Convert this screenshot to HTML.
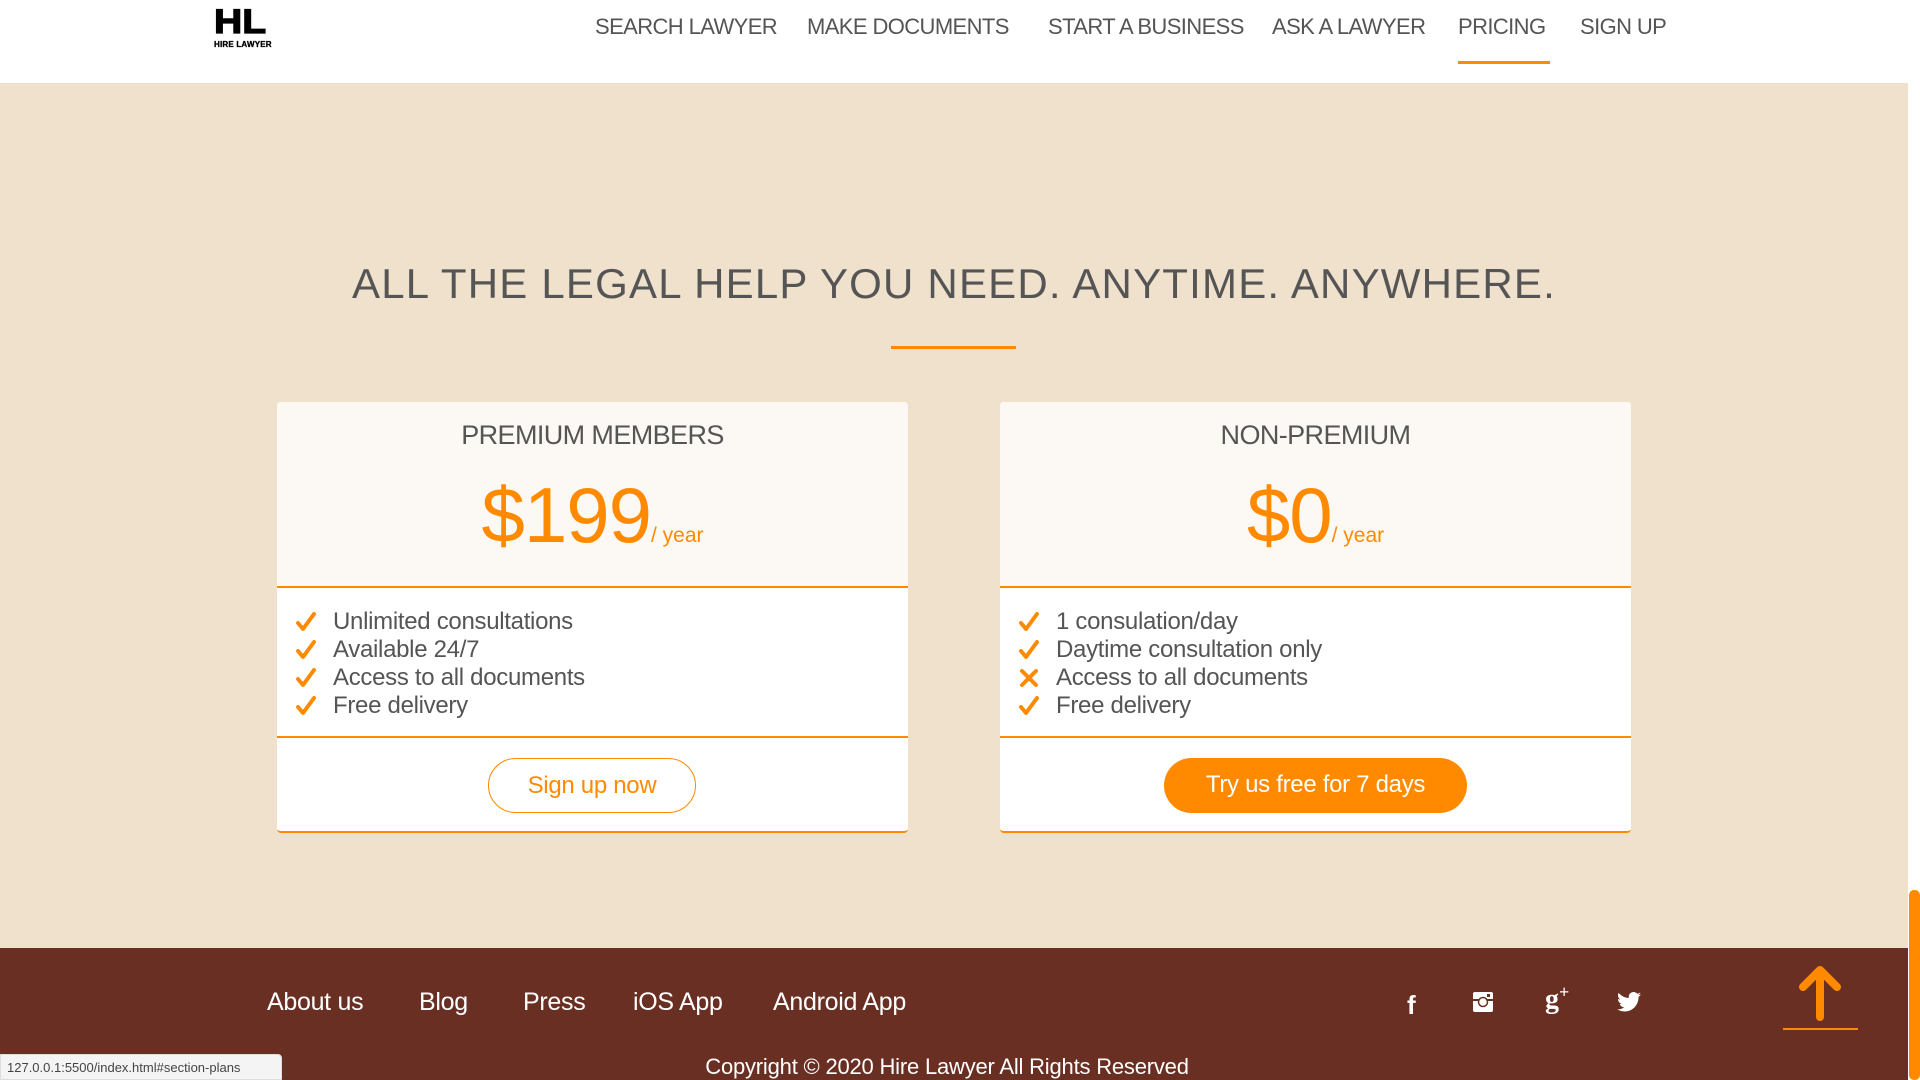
<!DOCTYPE html>
<html><head><meta charset="utf-8"><style>
*{margin:0;padding:0;box-sizing:border-box}
body{width:1920px;height:1080px;overflow:hidden;font-family:"Liberation Sans",sans-serif;background:#efe1cc;position:relative;color:#555}
.nav{position:absolute;left:0;top:0;width:1908px;height:64px;background:#fff;box-shadow:0 2px 3px rgba(0,0,0,.12)}
.gap{position:absolute;left:0;top:64px;width:1908px;height:19px;background:#fff}
.logo{position:absolute;left:214px;top:7px;color:#000;font-weight:bold}
.logo b{display:block;font-size:34px;line-height:30px;letter-spacing:0;transform:scaleX(1.15);transform-origin:left;-webkit-text-stroke:1.2px #000}
.logo i{display:block;font-style:normal;font-size:8px;letter-spacing:.2px;margin-top:3px;-webkit-text-stroke:.3px #000}
.nav a{position:absolute;top:14px;font-size:22px;color:#555;text-decoration:none;letter-spacing:-.6px;white-space:nowrap}
.ul{position:absolute;left:1458px;top:61px;width:92px;height:3px;background:#ff8a00}
h1{position:absolute;left:0;width:1908px;top:260px;text-align:center;font-weight:normal;font-size:42px;letter-spacing:1.2px;color:#555}
.line{position:absolute;left:891px;top:346px;width:125px;height:3px;background:#ff8a00}
.card{position:absolute;top:402px;width:631px;height:431px;background:#fff;border-radius:4px;border-bottom:2px solid #ff8a00;overflow:hidden}
.hd{height:186px;background:#fcf8f3;border-bottom:2px solid #ff8a00;text-align:center;position:relative}
.hd .t{position:absolute;top:18px;width:100%;font-size:27px;letter-spacing:-.6px;color:#555}
.hd .p{position:absolute;top:68px;width:100%;color:#ff8a00;font-size:78px;letter-spacing:-1px}
.hd .p small{font-size:21px;letter-spacing:0}
.ft{height:150px;border-bottom:2px solid #ff8a00;padding-top:20px;padding-left:18px}
.ft div{font-size:24px;line-height:28px;color:#555;letter-spacing:-.3px;display:flex;align-items:center}
.ft svg{width:38px;flex:none}
.btn{position:absolute;top:356px;height:55px;border-radius:28px;font-size:24px;line-height:53px;text-align:center;letter-spacing:-.3px}
.footer{position:absolute;left:0;top:948px;width:1908px;height:132px;background:#6a2f23;color:#fff}
.footer a{position:absolute;top:40px;font-size:25px;color:#fff;letter-spacing:-.3px}
.ic{position:absolute;top:42px;color:#fff;font-weight:bold}
.copy{position:absolute;top:106px;width:100%;text-align:center;font-size:22px;left:-7px;letter-spacing:-.2px}
.sb{position:absolute;left:1908px;top:0;width:12px;height:1080px;background:#fff}
.sb i{position:absolute;left:1px;top:890px;width:11px;height:190px;background:#ff8a00;border-radius:5px}
.status{position:absolute;left:0;top:1054px;width:282px;height:26px;background:#f4f4f4;border:1px solid #ddd;font-size:13px;color:#444;padding:5px 6px;border-radius:0 4px 0 0}
</style></head><body>
<div class="nav">
<div class="logo"><b>HL</b><i>HIRE LAWYER</i></div>
<a style="left:595px">SEARCH LAWYER</a>
<a style="left:807px">MAKE DOCUMENTS</a>
<a style="left:1048px">START A BUSINESS</a>
<a style="left:1272px">ASK A LAWYER</a>
<a style="left:1458px">PRICING</a>
<a style="left:1580px">SIGN UP</a>
<div class="ul"></div>
</div>
<div class="gap"></div>
<h1>ALL THE LEGAL HELP YOU NEED. ANYTIME. ANYWHERE.</h1>
<div class="line"></div>
<div class="card" style="left:277px">
<div class="hd"><div class="t">PREMIUM MEMBERS</div><div class="p">$199<small>/ year</small></div></div>
<div class="ft">
<div><svg height="20" viewBox="0 0 38 20"><path d="M3 11l5 6L19 2" stroke="#ff8a00" stroke-width="4" fill="none" stroke-linecap="round" stroke-linejoin="round"/></svg>Unlimited consultations</div>
<div><svg height="20" viewBox="0 0 38 20"><path d="M3 11l5 6L19 2" stroke="#ff8a00" stroke-width="4" fill="none" stroke-linecap="round" stroke-linejoin="round"/></svg>Available 24/7</div>
<div><svg height="20" viewBox="0 0 38 20"><path d="M3 11l5 6L19 2" stroke="#ff8a00" stroke-width="4" fill="none" stroke-linecap="round" stroke-linejoin="round"/></svg>Access to all documents</div>
<div><svg height="20" viewBox="0 0 38 20"><path d="M3 11l5 6L19 2" stroke="#ff8a00" stroke-width="4" fill="none" stroke-linecap="round" stroke-linejoin="round"/></svg>Free delivery</div>
</div>
<div class="btn" style="left:211px;width:208px;border:1.5px solid #ff8a00;color:#ff8a00">Sign up now</div>
</div>
<div class="card" style="left:1000px">
<div class="hd"><div class="t">NON-PREMIUM</div><div class="p">$0<small>/ year</small></div></div>
<div class="ft">
<div><svg height="20" viewBox="0 0 38 20"><path d="M3 11l5 6L19 2" stroke="#ff8a00" stroke-width="4" fill="none" stroke-linecap="round" stroke-linejoin="round"/></svg>1 consulation/day</div>
<div><svg height="20" viewBox="0 0 38 20"><path d="M3 11l5 6L19 2" stroke="#ff8a00" stroke-width="4" fill="none" stroke-linecap="round" stroke-linejoin="round"/></svg>Daytime consultation only</div>
<div><svg height="20" viewBox="0 0 38 20"><path d="M4 3l14 14M18 3L4 17" stroke="#ff8a00" stroke-width="4" fill="none" stroke-linecap="round"/></svg>Access to all documents</div>
<div><svg height="20" viewBox="0 0 38 20"><path d="M3 11l5 6L19 2" stroke="#ff8a00" stroke-width="4" fill="none" stroke-linecap="round" stroke-linejoin="round"/></svg>Free delivery</div>
</div>
<div class="btn" style="left:164px;width:303px;background:#ff8a00;color:#fff">Try us free for 7 days</div>
</div>
<div class="footer">
<a style="left:267px">About us</a>
<a style="left:419px">Blog</a>
<a style="left:523px">Press</a>
<a style="left:633px">iOS App</a>
<a style="left:773px">Android App</a>
<div class="ic" style="left:1407px;font-size:26px;font-family:'Liberation Sans',sans-serif">f</div>
<svg class="ic" style="left:1473px;top:44px" width="20" height="20" viewBox="0 0 20 20"><rect x="0" y="0" width="20" height="20" rx="2" fill="#fff"/><rect x="0" y="7" width="20" height="2" fill="#6a2f23"/><circle cx="10" cy="10" r="4.5" fill="#fff" stroke="#6a2f23" stroke-width="1.5"/><rect x="14" y="2" width="3" height="3" fill="#6a2f23"/></svg>
<div class="ic" style="left:1545px;top:36px;font-size:28px;font-family:'Liberation Serif',serif">g<span style="font-size:18px;position:relative;top:-10px">+</span></div>
<svg class="ic" style="left:1617px;top:44px" width="24" height="20" viewBox="0 0 24 20"><path fill="#fff" d="M24 2.4c-.9.4-1.8.6-2.8.8 1-.6 1.8-1.6 2.2-2.7-1 .6-2 1-3.1 1.2C19.3.7 18 0 16.6 0c-2.7 0-4.9 2.2-4.9 4.9 0 .4 0 .8.1 1.1C7.7 5.800 4.1 3.9 1.7.9c-.4.7-.7 1.6-.7 2.5 0 1.7.9 3.2 2.2 4.1-.8 0-1.6-.2-2.2-.6v.1c0 2.4 1.700 4.4 3.9 4.8-.4.1-.8.2-1.3.2-.3 0-.6 0-.9-.1.6 2 2.4 3.4 4.6 3.4-1.7 1.3-3.8 2.1-6.1 2.1-.4 0-.8 0-1.2-.1 2.2 1.4 4.8 2.2 7.500 2.2 9.1 0 14-7.5 14-14v-.6c1-.7 1.8-1.6 2.5-2.5z"/></svg>
<svg style="position:absolute;left:1797px;top:17px" width="46" height="56" viewBox="0 0 46 56"><path d="M23 52V6M6 22L23 5 40 22" stroke="#ff8a00" stroke-width="8" stroke-linecap="round" stroke-linejoin="round" fill="none"/></svg>
<div style="position:absolute;left:1783px;top:80px;width:75px;height:2px;background:#ff8a00"></div>
<div class="copy">Copyright © 2020 Hire Lawyer All Rights Reserved</div>
</div>
<div class="sb"><i></i></div>
<div class="status">127.0.0.1:5500/index.html#section-plans</div>
</body></html>
